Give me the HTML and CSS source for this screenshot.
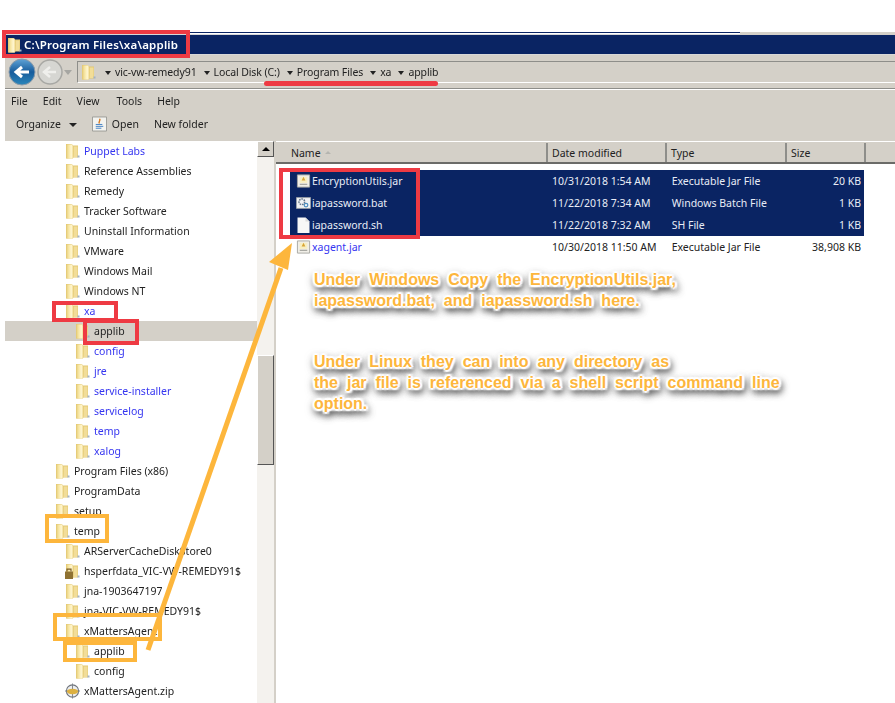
FILE: index.html
```html
<!DOCTYPE html>
<html lang="en">
<head>
    <meta charset="UTF-8">
    <meta name="viewport" content="width=device-width, initial-scale=1.0">
    <title>C:\Program Files\xa\applib</title>
    <link rel="stylesheet" href="styles.css">
</head>
<body>
    <svg class="defs" width="0" height="0">
        <defs>
            <linearGradient id="fold" x1="0" y1="0" x2="1" y2="0">
                <stop offset="0" stop-color="#e8d07e"/>
                <stop offset="0.35" stop-color="#f8e8a8"/>
                <stop offset="0.7" stop-color="#fff6d0"/>
                <stop offset="1" stop-color="#ecd588"/>
            </linearGradient>
            <symbol id="folder" viewBox="0 0 15 16">
                <path d="M1 1h5.500l1.500 1.500h5v12H8.500L7.500 15.500H1z" fill="#e3c873"/>
                <path d="M1.500 1.500H7.500c1.200 3 1.200 9 .5 14H1.500z" fill="url(#fold)"/>
                <path d="M8.700 3.500h3.800v10.500H8.500c.5-3.500.6-7 .2-10.500z" fill="#f2dd98"/>
                <path d="M12.500 12.500h2v2h-2z" fill="#a3b2c6"/>
            </symbol>
            <symbol id="jar" viewBox="0 0 16 16">
                <path d="M1.500 1.500h13v13h-13z" fill="#f1efe8" stroke="#a8a8a2"/>
                <path d="M4 3.500h8v6.500H4z" fill="#f8efc2"/>
                <path d="M8 3.500l2 4H6z" fill="#d8a535"/>
                <path d="M4 11.500h8" stroke="#8f8f8a"/>
            </symbol>
            <symbol id="openjar" viewBox="0 0 16 16">
                <path d="M.5 .5h15v15H.5z" fill="#f3f3ef" stroke="#9a9a95"/>
                <path d="M8 2.500c2 2-2 3 0 5" fill="none" stroke="#d8781f" stroke-width="1.500"/>
                <path d="M4 8.500h7M4 10.500h8M4 12.500h6" stroke="#3f7fc2"/>
            </symbol>
            <symbol id="bat" viewBox="0 0 18 16">
                <path d="M.5 1.500h17v13H.5z" fill="#f0f2f4" stroke="#9aa0a6"/>
                <circle cx="7" cy="6.500" r="3.400" fill="none" stroke="#66778c" stroke-width="1.800" stroke-dasharray="2 1"/>
                <circle cx="12" cy="10.500" r="2.200" fill="none" stroke="#4d8fc0" stroke-width="1.500"/>
            </symbol>
            <symbol id="doc" viewBox="0 0 14 16">
                <path d="M1 .5h8l4 4v11.500H1z" fill="#f7f7f7"/>
                <path d="M9 .5v4h4z" fill="#dcdcdc"/>
            </symbol>
            <symbol id="zip" viewBox="0 0 16 16">
                <circle cx="8" cy="8" r="6.500" fill="#eceef0" stroke="#6f747c" stroke-width="1.200"/>
                <path d="M8 0v16M0 8h16" stroke="#7d828a"/>
                <ellipse cx="8" cy="8.500" rx="6" ry="3" fill="#dcb041"/>
            </symbol>
            <symbol id="lockfolder" viewBox="0 0 15 16">
                <use href="#folder" width="15" height="16"/>
                <path d="M0 8.500h8v7.500H0z" fill="#8f7232"/>
                <path d="M2 8.500V6.200h4v2.300" fill="none" stroke="#7a5c26" stroke-width="1.200"/>
            </symbol>
        </defs>
    </svg>

    <div class="window">
        <div class="topline"></div>
        <div class="titlebar">
            <svg class="ico"><use href="#folder"/></svg>
            <span>C:\Program Files\xa\applib</span>
        </div>

        <div class="addressbar">
            <div class="nav">
                <svg width="60" height="28" viewBox="0 0 60 28">
                    <defs>
                        <linearGradient id="backblue" x1="0" y1="0" x2="0" y2="1">
                            <stop offset="0" stop-color="#5fa3d6"/>
                            <stop offset="0.5" stop-color="#175c9c"/>
                            <stop offset="1" stop-color="#2a86bb"/>
                        </linearGradient>
                    </defs>
                    <circle cx="47" cy="14" r="12" fill="#d6d6d2" stroke="#a8a8a4" stroke-width="1.500"/>
                    <path d="M41 14h12M47 9l-6 5 6 5" fill="none" stroke="#efefec" stroke-width="2.500"/>
                    <circle cx="19" cy="14" r="13" fill="url(#backblue)" stroke="#8b9aa8"/>
                    <path d="M26 14H14M19 9l-6 5 6 5" fill="none" stroke="#fff" stroke-width="3"/>
                </svg>
                <i class="hist-caret"></i>
            </div>
            <div class="crumbs">
                <svg class="ico crumb-folder"><use href="#folder"/></svg>
                <i class="caret"></i><span>vic-vw-remedy91</span>
                <i class="caret"></i><span>Local Disk (C:)</span>
                <i class="caret"></i><span>Program Files</span>
                <i class="caret"></i><span>xa</span>
                <i class="caret"></i><span>applib</span>
            </div>
        </div>

        <div class="menubar">
            <span>File</span><span>Edit</span><span>View</span><span>Tools</span><span>Help</span>
        </div>

        <div class="toolbar">
            <span>Organize</span><i class="caret organize-caret"></i>
            <svg class="ico open-ico"><use href="#openjar"/></svg>
            <span class="open-label">Open</span>
            <span>New folder</span>
        </div>

        <div class="panes">
            <div class="tree-pane">
                <ul class="tree">
                    <li class="d3 link"><svg class="ico"><use href="#folder"/></svg>Puppet Labs</li>
                    <li class="d3"><svg class="ico"><use href="#folder"/></svg>Reference Assemblies</li>
                    <li class="d3"><svg class="ico"><use href="#folder"/></svg>Remedy</li>
                    <li class="d3"><svg class="ico"><use href="#folder"/></svg>Tracker Software</li>
                    <li class="d3"><svg class="ico"><use href="#folder"/></svg>Uninstall Information</li>
                    <li class="d3"><svg class="ico"><use href="#folder"/></svg>VMware</li>
                    <li class="d3"><svg class="ico"><use href="#folder"/></svg>Windows Mail</li>
                    <li class="d3"><svg class="ico"><use href="#folder"/></svg>Windows NT</li>
                    <li class="d3 link"><svg class="ico"><use href="#folder"/></svg>xa</li>
                    <li class="d4 current"><svg class="ico"><use href="#folder"/></svg>applib</li>
                    <li class="d4 link"><svg class="ico"><use href="#folder"/></svg>config</li>
                    <li class="d4 link"><svg class="ico"><use href="#folder"/></svg>jre</li>
                    <li class="d4 link"><svg class="ico"><use href="#folder"/></svg>service-installer</li>
                    <li class="d4 link"><svg class="ico"><use href="#folder"/></svg>servicelog</li>
                    <li class="d4 link"><svg class="ico"><use href="#folder"/></svg>temp</li>
                    <li class="d4 link"><svg class="ico"><use href="#folder"/></svg>xalog</li>
                    <li class="d2"><svg class="ico"><use href="#folder"/></svg>Program Files (x86)</li>
                    <li class="d2"><svg class="ico"><use href="#folder"/></svg>ProgramData</li>
                    <li class="d2"><svg class="ico"><use href="#folder"/></svg>setup</li>
                    <li class="d2"><svg class="ico"><use href="#folder"/></svg>temp</li>
                    <li class="d3"><svg class="ico"><use href="#folder"/></svg>ARServerCacheDiskStore0</li>
                    <li class="d3"><svg class="ico"><use href="#lockfolder"/></svg>hsperfdata_VIC-VW-REMEDY91$</li>
                    <li class="d3"><svg class="ico"><use href="#folder"/></svg>jna-1903647197</li>
                    <li class="d3"><svg class="ico"><use href="#folder"/></svg>jna-VIC-VW-REMEDY91$</li>
                    <li class="d3"><svg class="ico"><use href="#folder"/></svg>xMattersAgent</li>
                    <li class="d4"><svg class="ico"><use href="#folder"/></svg>applib</li>
                    <li class="d4"><svg class="ico"><use href="#folder"/></svg>config</li>
                    <li class="d3"><svg class="ico"><use href="#zip"/></svg>xMattersAgent.zip</li>
                </ul>
                <div class="scrollbar">
                    <div class="scroll-up"><i></i></div>
                    <div class="scroll-thumb"></div>
                </div>
            </div>

            <div class="file-pane">
                <div class="file-head">
                    <div class="col-name">Name <i class="sort"></i></div>
                    <div class="col-date">Date modified</div>
                    <div class="col-type">Type</div>
                    <div class="col-size">Size</div>
                    <div class="col-rest"></div>
                </div>
                <div class="file-list">
                    <div class="file selected">
                        <div class="col-name"><svg class="ico"><use href="#jar"/></svg>EncryptionUtils.jar</div>
                        <div class="col-date">10/31/2018 1:54 AM</div>
                        <div class="col-type">Executable Jar File</div>
                        <div class="col-size">20 KB</div>
                    </div>
                    <div class="file selected">
                        <div class="col-name"><svg class="ico"><use href="#bat"/></svg>iapassword.bat</div>
                        <div class="col-date">11/22/2018 7:34 AM</div>
                        <div class="col-type">Windows Batch File</div>
                        <div class="col-size">1 KB</div>
                    </div>
                    <div class="file selected">
                        <div class="col-name"><svg class="ico"><use href="#doc"/></svg>iapassword.sh</div>
                        <div class="col-date">11/22/2018 7:32 AM</div>
                        <div class="col-type">SH File</div>
                        <div class="col-size">1 KB</div>
                    </div>
                    <div class="file">
                        <div class="col-name link"><svg class="ico"><use href="#jar"/></svg>xagent.jar</div>
                        <div class="col-date">10/30/2018 11:50 AM</div>
                        <div class="col-type">Executable Jar File</div>
                        <div class="col-size">38,908 KB</div>
                    </div>
                </div>
                <div class="callouts">
                    <p>Under Windows Copy the EncryptionUtils.jar,<br>iapassword.bat, and iapassword.sh here.</p>
                    <p>Under Linux they can into any directory as<br>the jar file is referenced via a shell script command line<br>option.</p>
                </div>
            </div>
        </div>
    </div>

    <!-- annotations drawn over the screenshot -->
    <div class="mark red box-title"></div>
    <div class="mark red box-files"></div>
    <div class="mark red box-xa"></div>
    <div class="mark red box-applib"></div>
    <div class="mark red line-path"></div>
    <div class="mark orange box-temp"></div>
    <div class="mark orange box-agent"></div>
    <div class="mark orange box-agentlib"></div>
    <svg class="arrow" width="895" height="703" viewBox="0 0 895 703">
        <path d="M148 650L281 268" fill="none" stroke="#fdb63c" stroke-width="5"/>
        <path d="M292 243L269 262 288 270z" fill="#fdb63c"/>
    </svg>
</body>
</html>
```

FILE: styles.css
```css
* {
    box-sizing: border-box;
}
html, body {
    margin: 0;
    padding: 0;
}
body {
    width: 895px;
    height: 703px;
    overflow: hidden;
    position: relative;
    background: #fff;
    font-family: "Noto Sans", "Open Sans", sans-serif;
    font-size: 10.5px;
    color: #222;
}
.defs {
    position: absolute;
}
.ico {
    width: 15px;
    height: 16px;
    flex: none;
}
.window {
    margin: 32px 0 0 5px;
    height: 671px;
    background: #d4d0c8;
    display: flex;
    flex-direction: column;
    filter: blur(0.4px);
}
.topline {
    height: 3px;
    background: #fff;
    border-top: 1px solid #0a2463;
    border-bottom: 1px solid #d8d8d8;
    margin-right: 155px;
}
.titlebar {
    height: 20px;
    background: #0a2463;
    color: #fff;
    font-size: 11.5px;
    font-weight: 600;
    letter-spacing: 0.2px;
    display: flex;
    align-items: center;
    gap: 2px;
    padding-left: 2px;
    border-bottom: 1px solid #d8d8d8;
}
.addressbar {
    height: 34px;
    display: flex;
    align-items: center;
    border-bottom: 1px solid #8e8e8a;
    padding-top: 1px;
}
.nav {
    width: 73px;
    display: flex;
    align-items: center;
    margin-left: -1px;
}
.nav svg {
    margin-left: -1px;
}
.hist-caret {
    border: 4px solid transparent;
    border-top: 5px solid #a6a6a2;
    border-bottom: 0;
    margin-left: 1px;
}
.crumbs {
    flex: 1;
    height: 22px;
    display: flex;
    align-items: center;
    border-top: 1px solid #8e8e8a;
    border-left: 1px solid #8e8e8a;
    border-bottom: 1px solid #fff;
    padding-left: 3px;
    letter-spacing: -0.1px;
}
.crumb-folder {
    margin-right: 9px;
}
.caret {
    border: 3px solid transparent;
    border-top: 4px solid #222;
    border-bottom: 0;
    margin: 1px 4px 0 7px;
}
.crumbs .caret:first-of-type {
    margin-left: 0;
}
.menubar {
    height: 23px;
    display: flex;
    align-items: center;
    gap: 15px;
    padding-left: 6px;
    border-top: 1px solid #fff;
}
.menubar span:nth-child(4) {
    margin-left: 2px;
}
.toolbar {
    height: 29px;
    display: flex;
    align-items: center;
    padding: 0 0 5px 11px;
}
.organize-caret {
    margin: 1px 15px 0 8px;
    border-width: 4px;
}
.open-ico {
    margin-right: 5px;
}
.open-label {
    margin-right: 15px;
}
.panes {
    flex: 1;
    display: flex;
    gap: 2px;
    min-height: 0;
}
.tree-pane {
    width: 269px;
    display: flex;
    background: #fff;
    overflow: hidden;
}
.tree {
    list-style: none;
    margin: 0;
    padding: 0;
    width: 252px;
    flex: none;
}
.tree li {
    height: 20px;
    display: flex;
    align-items: center;
    gap: 4px;
    white-space: nowrap;
}
.tree .d2 { padding-left: 50px; }
.tree .d3 { padding-left: 60px; }
.tree .d4 { padding-left: 70px; }
.tree .current {
    background: #d4d0c8;
}
.link {
    color: #3535f0;
}
.scrollbar {
    width: 17px;
    position: relative;
    background: #f4f2ee;
}
.scroll-up {
    height: 16px;
    background: #d4d0c8;
    border: 1px solid;
    border-color: #fff #555 #555 #fff;
    display: flex;
    align-items: center;
    justify-content: center;
}
.scroll-up i {
    border: 4px solid transparent;
    border-bottom: 4px solid #000;
    border-top: 0;
}
.scroll-thumb {
    margin-top: 198px;
    height: 110px;
    background: #d4d0c8;
    border: 1px solid;
    border-color: #fff #555 #555 #fff;
}
.file-pane {
    flex: 1;
    background: #fff;
    min-width: 0;
}
.file-head {
    height: 23px;
    display: flex;
    background: #d4d0c8;
    border-top: 1px solid #fff;
    border-bottom: 2px solid #6b6b68;
    padding-top: 1px;
}
.file-head > div {
    display: flex;
    align-items: center;
    border-right: 2px solid #8e8e8a;
    padding-left: 4px;
}
.file-head .col-name {
    padding-left: 15px;
    gap: 4px;
}
.sort {
    border: 3px solid transparent;
    border-bottom: 3px solid #b5b5b0;
    border-top: 0;
}
.col-name { width: 272px; }
.col-date { width: 119px; }
.col-type { width: 120px; }
.col-size { width: 79px; }
.file-head .col-rest {
    flex: 1;
    border-right: 0;
}
.file-list {
    padding-top: 6px;
}
.file {
    height: 22px;
    width: 588px;
    display: flex;
    align-items: center;
}
.file > div {
    display: flex;
    align-items: center;
    white-space: nowrap;
    padding-left: 5px;
}
.file .col-type {
    padding-left: 6px;
}
.file .col-name {
    padding-left: 20px;
    gap: 1px;
}
.file .col-size {
    justify-content: flex-end;
    padding-right: 3px;
}
.file.selected {
    background: linear-gradient(to right, #fff 14px, #0a2463 14px);
    color: #e8ecf6;
}
.callouts {
    margin: 11px 0 0 38px;
    font-family: "Liberation Sans", Arial, sans-serif;
    font-size: 16px;
    font-weight: 700;
    line-height: 21px;
    word-spacing: 4.5px;
    color: #fdb63c;
    text-shadow:
        1px 0 1px #fff, -1px 0 1px #fff, 0 1px 1px #fff, 0 -1px 1px #fff,
        2px 0 1px #fff, -2px 0 1px #fff, 0 2px 1px #fff, 0 -2px 1px #fff,
        2px 2px 2px #fff, -2px -2px 2px #fff, 2px -2px 2px #fff, -2px 2px 2px #fff,
        2px 4px 6px #333, 2px 4px 8px #444, 0 3px 10px #666;
}
.callouts p {
    margin: 0 0 40px;
}
.mark {
    position: absolute;
    border: 4px solid;
}
.red { border-color: #ee3a43; }
.orange { border-color: #fdb63c; }
.box-title { left: 2px; top: 30px; width: 188px; height: 28px; }
.box-files { left: 279px; top: 168px; width: 141px; height: 71px; }
.box-xa { left: 52px; top: 301px; width: 66px; height: 21px; }
.box-applib { left: 83px; top: 319px; width: 56px; height: 26px; }
.box-temp { left: 45px; top: 514px; width: 64px; height: 29px; }
.box-agent { left: 53px; top: 613px; width: 109px; height: 28px; }
.box-agentlib { left: 63px; top: 641px; width: 74px; height: 21px; }
.line-path {
    left: 264px;
    top: 81px;
    width: 174px;
    height: 5px;
    border: 0;
    border-radius: 3px;
    background: #ee3a43;
}
.arrow {
    position: absolute;
    left: 0;
    top: 0;
}
```
